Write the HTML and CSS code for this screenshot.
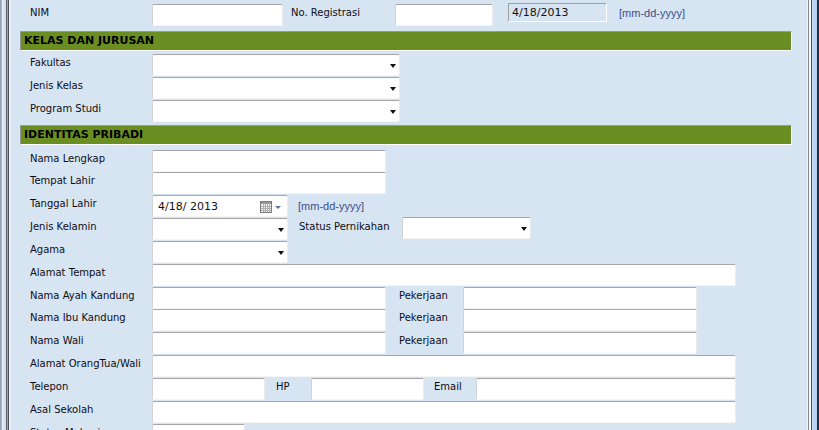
FILE: index.html
```html
<!DOCTYPE html>
<html>
<head>
<meta charset="utf-8">
<link rel="stylesheet" href="styles.css">
</head>
<body>
<div class="window">
  <div class="frame-left"></div>
  <div class="panel">
    <div class="row row-nim">
      <div class="lbl">NIM</div>
      <div class="in w131"></div>
      <div class="cell c-reg">No. Registrasi</div>
      <div class="in w98"></div>
      <div class="datebox">4/18/2013</div>
      <div class="hint hint-top">[mm-dd-yyyy]</div>
    </div>

    <div class="hdr">KELAS DAN JURUSAN</div>
    <div class="sec sec1">
      <div class="row"><div class="lbl">Fakultas</div><div class="in sel w248"><span class="arrow"></span></div></div>
      <div class="row"><div class="lbl">Jenis Kelas</div><div class="in sel w248"><span class="arrow"></span></div></div>
      <div class="row"><div class="lbl">Program Studi</div><div class="in sel w248"><span class="arrow"></span></div></div>
    </div>

    <div class="hdr hdr2">IDENTITAS PRIBADI</div>
    <div class="sec sec2">
      <div class="row"><div class="lbl">Nama Lengkap</div><div class="in w234"></div></div>
      <div class="row"><div class="lbl">Tempat Lahir</div><div class="in w234"></div></div>
      <div class="row">
        <div class="lbl">Tanggal Lahir</div>
        <div class="in picker w136">
          <span class="pick-val">4/18/ 2013</span>
          <svg class="cal" width="22" height="12" viewBox="0 0 22 12">
            <rect x="0.5" y="0.5" width="11" height="11" fill="#f2f2f2" stroke="#7a7a7a"/>
            <rect x="1" y="1" width="10" height="2" fill="#9a9a9a"/>
            <path d="M1 5.5H11M1 7.5H11M1 9.5H11M3.5 3V11M5.5 3V11M7.5 3V11M9.5 3V11" stroke="#b0b0b0" stroke-width="1"/>
            <path d="M15 5H21L18 8Z" fill="#5b6f98"/>
          </svg>
        </div>
        <div class="hint hint-mid">[mm-dd-yyyy]</div>
      </div>
      <div class="row">
        <div class="lbl">Jenis Kelamin</div>
        <div class="in sel w136"><span class="arrow"></span></div>
        <div class="cell c-status">Status Pernikahan</div>
        <div class="in sel w129 up"><span class="arrow"></span></div>
      </div>
      <div class="row"><div class="lbl">Agama</div><div class="in sel w136"><span class="arrow"></span></div></div>
      <div class="row"><div class="lbl">Alamat Tempat</div><div class="in w584"></div></div>
      <div class="row">
        <div class="lbl">Nama Ayah Kandung</div>
        <div class="in w234"></div>
        <div class="cell c-job">Pekerjaan</div>
        <div class="in w234"></div>
      </div>
      <div class="row">
        <div class="lbl">Nama Ibu Kandung</div>
        <div class="in w234"></div>
        <div class="cell c-job">Pekerjaan</div>
        <div class="in w234"></div>
      </div>
      <div class="row">
        <div class="lbl">Nama Wali</div>
        <div class="in w234"></div>
        <div class="cell c-job">Pekerjaan</div>
        <div class="in w234"></div>
      </div>
      <div class="row"><div class="lbl">Alamat OrangTua/Wali</div><div class="in w584"></div></div>
      <div class="row">
        <div class="lbl">Telepon</div>
        <div class="in w113"></div>
        <div class="cell c-hp">HP</div>
        <div class="in w113"></div>
        <div class="cell c-mail">Email</div>
        <div class="in w260"></div>
      </div>
      <div class="row"><div class="lbl">Asal Sekolah</div><div class="in w584"></div></div>
      <div class="row"><div class="lbl">Status Mahasiswa</div><div class="in w93"></div></div>
    </div>
  </div>
  <div class="frame-right"></div>
</div>
</body>
</html>
```

FILE: styles.css
```css
* { box-sizing: border-box; }

html, body {
  margin: 0;
  padding: 0;
}

body {
  width: 819px;
  height: 430px;
  overflow: hidden;
  background: #d7e4f2;
  font-family: "DejaVu Sans", sans-serif;
  font-size: 10px;
  color: #0d0d14;
}

.window {
  display: flex;
  height: 430px;
}

.frame-left {
  flex: none;
  width: 12px;
  background: linear-gradient(to right,
    #8e9db2 0px, #a9b8ca 2px,
    #e6eef7 2px, #cdd9e6 6px,
    #59616d 6px, #59616d 7px,
    #9aa3ae 7px, #9aa3ae 8px,
    #434b55 8px, #434b55 9px,
    #f3f6fa 9px, #e6edf5 11px,
    #d7e4f2 11px);
}

.frame-right {
  flex: none;
  width: 12px;
  background: linear-gradient(to right,
    #eef3f8 0px, #eef3f8 1px,
    #808892 1px, #808892 2px,
    #fbfcfe 2px, #fbfcfe 4px,
    #4b5460 4px, #4b5460 5px,
    #c4dcf4 5px, #aecdee 10px,
    #27303b 10px);
}

.panel {
  flex: 1;
  padding: 4px 15px 0 8px;
}

.row {
  display: flex;
  align-items: flex-start;
  height: 22px;
  padding-left: 10px;
  margin-bottom: 0.83px;
}

.row-nim {
  margin-bottom: 5px;
}

.lbl {
  flex: none;
  width: 122px;
  line-height: 18px;
  white-space: nowrap;
}

.cell {
  flex: none;
  height: 22px;
  line-height: 18px;
  white-space: nowrap;
}

.c-reg { width: 112px; padding-left: 8px; }
.c-status { width: 114px; padding-left: 11px; }
.c-job { width: 77px; padding-left: 13px; }
.c-hp { width: 46px; padding-left: 11px; }
.c-mail { width: 52px; padding-left: 10px; }

.in {
  flex: none;
  height: 22px;
  background: #fff;
  border-top: 1px solid #a6a6a6;
  border-left: 1px solid #d2d2d2;
  border-right: 1px solid #ececec;
  border-bottom: 1px solid #f6f6f6;
  border-radius: 2px;
}

.w93 { width: 93px; }
.w98 { width: 98px; }
.w113 { width: 113px; }
.w129 { width: 129px; }
.w131 { width: 131px; }
.w136 { width: 136px; }
.w234 { width: 234px; }
.w248 { width: 248px; }
.w260 { width: 260px; }
.w584 { width: 584px; }

.up { margin-top: -1px; }

.sel {
  display: flex;
  align-items: center;
  justify-content: flex-end;
  padding-right: 3px;
}

.arrow {
  display: block;
  width: 0;
  height: 0;
  margin-top: 2px;
  border-left: 3.5px solid transparent;
  border-right: 3.5px solid transparent;
  border-top: 4px solid #111;
}

.picker {
  display: flex;
  align-items: center;
  justify-content: space-between;
  padding: 0 5px 0 5px;
}

.pick-val {
  font-family: "DejaVu Sans", sans-serif;
  font-size: 11px;
  color: #111;
  padding-top: 1px;
}

.cal {
  display: block;
  margin-top: 1px;
}

.datebox {
  flex: none;
  width: 99px;
  height: 19px;
  margin: -1px 0 0 15px;
  padding-left: 3px;
  border-top: 1px solid #a0a0a0;
  border-left: 1px solid #a0a0a0;
  border-right: 1px solid #fff;
  border-bottom: 1px solid #fff;
  font-family: "DejaVu Sans", sans-serif;
  font-size: 11px;
  line-height: 17px;
  color: #111;
}

.hint {
  flex: none;
  font-family: "Liberation Sans", Arial, sans-serif;
  font-size: 11px;
  color: #3e4f8e;
  white-space: nowrap;
}

.hint-top {
  margin-left: 12px;
  line-height: 18px;
}

.hint-mid {
  margin-left: 10px;
  line-height: 22px;
}

.hdr {
  height: 20px;
  background: #6b8e23;
  border-top: 1px solid #9a9a9a;
  border-left: 1px solid #9a9a9a;
  border-right: 1px solid #fff;
  border-bottom: 1px solid #fff;
  padding-left: 3px;
  font-family: "DejaVu Sans", sans-serif;
  font-weight: bold;
  font-size: 11px;
  line-height: 18px;
  color: #000;
}

.sec1 { margin-top: 3px; }
.hdr2 { margin-top: 3px; }
.sec2 { margin-top: 5px; }
```
